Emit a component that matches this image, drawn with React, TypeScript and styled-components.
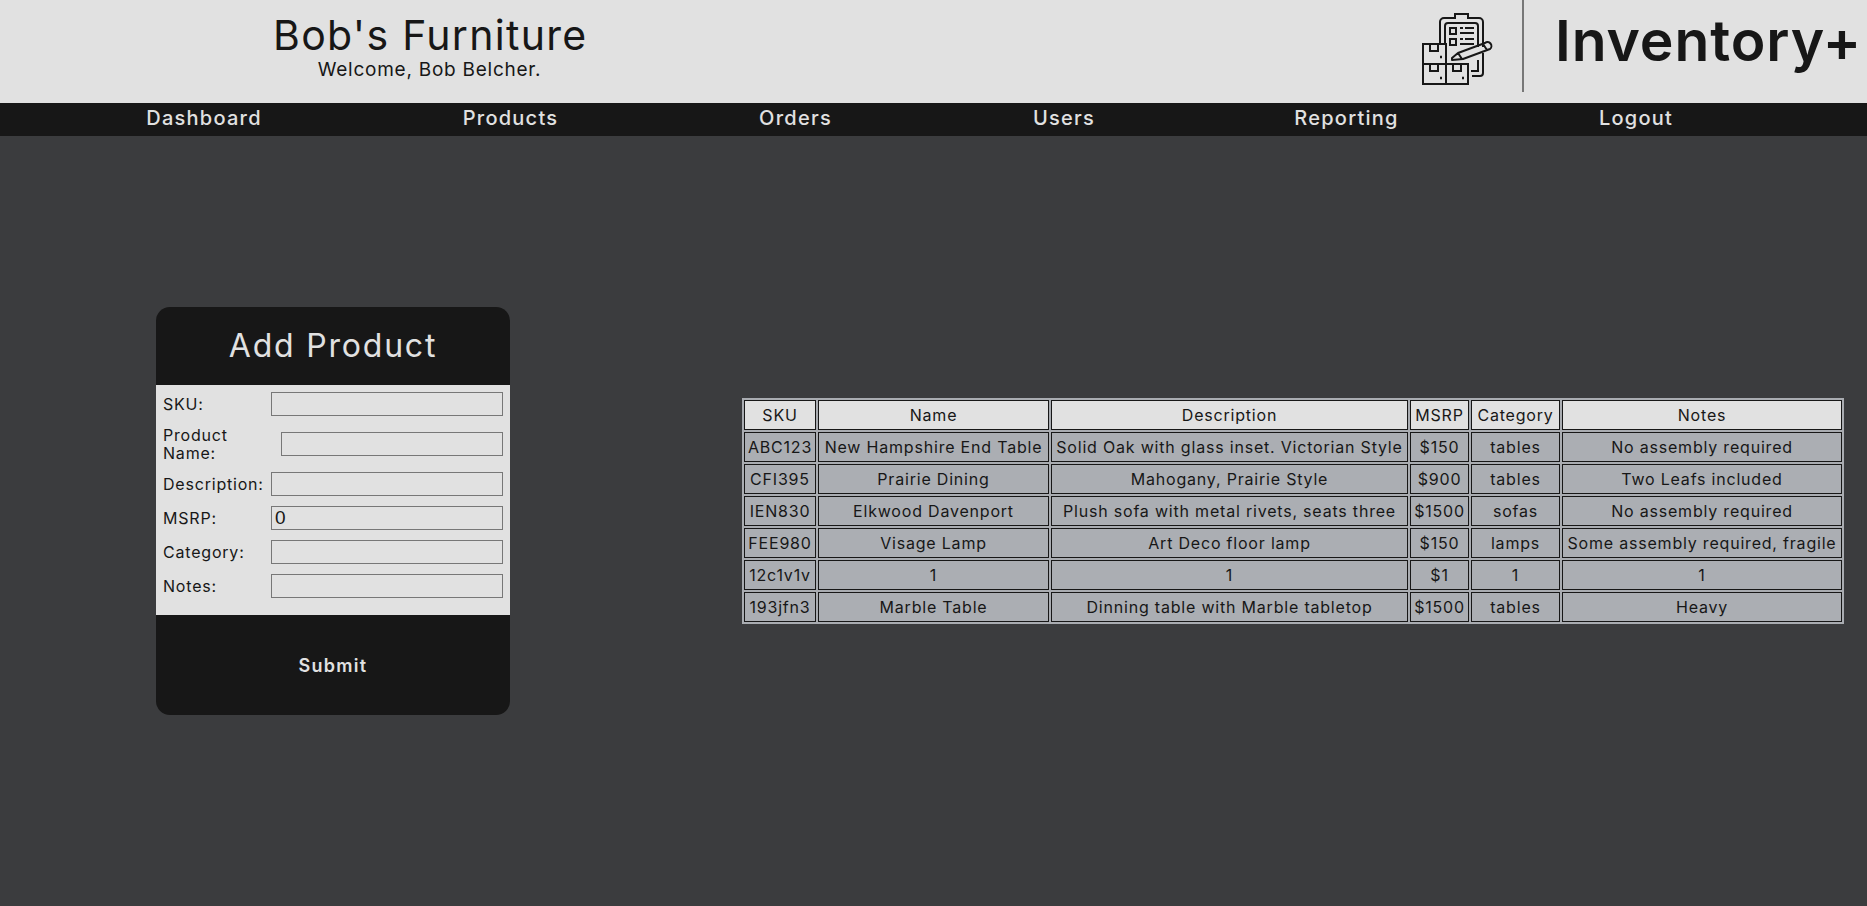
import React from "react";
import styled, { createGlobalStyle } from "styled-components";

const FONT = `Inter, "Open Sans", "Liberation Sans", sans-serif`;
const Global = createGlobalStyle`
  html, body { margin: 0; padding: 0; background: #3b3c3e; }
  body { font-family: ${FONT}; color: #171717; }
  * { box-sizing: border-box; }
`;
const Page = styled.div`width: 1867px; height: 906px; overflow: hidden; background: #3b3c3e;`;
const Header = styled.header`height: 103px; background: #e1e1e1; display: flex; justify-content: space-between; align-items: flex-start;`;
const Brand = styled.div`margin-left: 273px; width: 313px; padding-top: 11px; text-align: center;`;
const Title = styled.h1`margin: 0; font-size: 41px; line-height: 48px; font-weight: 400; letter-spacing: 1.3px; white-space: nowrap;`;
const Welcome = styled.div`font-size: 19px; line-height: 22px; letter-spacing: 0.75px; white-space: nowrap;`;
const Logo = styled.div`display: flex; align-items: flex-start; width: 447px;`;
const LogoIcon = styled.svg`width: 75px; height: 75px; margin-top: 10px; flex: none;`;
const Divider = styled.div`width: 2px; height: 92px; background: #777; margin-left: 27px; flex: none;`;
const LogoText = styled.div`font-size: 57px; line-height: 82px; font-weight: 600; letter-spacing: 0.9px; margin-left: 31px; white-space: nowrap;`;
const Nav = styled.nav`height: 33px; background: #171717; display: flex; padding-left: 145px; gap: 201px; align-items: flex-start; padding-top: 1px;`;
const NavLink = styled.a<{ $w: number }>`color: #e1e1e1; font-size: 20px; line-height: 28px; font-weight: 500; letter-spacing: 1.25px; width: ${p => p.$w}px; display: flex; justify-content: center; white-space: nowrap; flex: none;`;
const Main = styled.main`height: 750px; display: flex; align-items: center; padding-left: 156px; gap: 232px;`;
const Card = styled.section`width: 354px; height: 408px; border-radius: 14px; overflow: hidden; background: #171717; display: flex; flex-direction: column; flex: none;`;
const CardTitle = styled.h2`margin: 0; height: 78px; color: #e1e1e1; font-size: 32px; font-weight: 400; letter-spacing: 1.8px; line-height: 78px; text-align: center;`;
const Form = styled.div`height: 230px; background: #e1e1e1; padding: 7px; display: flex; flex-direction: column; gap: 10px;`;
const Row = styled.div<{ $h: number }>`display: flex; align-items: center; height: ${p => p.$h}px; flex: none;`;
const Label = styled.label<{ $w: number }>`flex: none; width: ${p => p.$w}px; font-size: 16px; line-height: 18px; letter-spacing: 0.8px; padding-right: 6px;`;
const Input = styled.input`flex: 1; min-width: 0; height: 24px; border: 1px solid #777; background: #e1e1e1; padding: 0 3px; font: 19px "Liberation Sans", sans-serif; color: #171717; border-radius: 0;`;
const Submit = styled.button`flex: 1; border: 0; background: transparent; color: #e1e1e1; font: 600 18px ${FONT}; letter-spacing: 1.3px; padding: 0;`;
const Table = styled.table`width: 1102px; table-layout: fixed; border: 0; border-collapse: separate; border-spacing: 2px; flex: none; background: #a9acb1;`;
const Th = styled.th`height: 30px; padding: 0; border: 1px solid #171717; background: #e1e1e1; font-size: 16px; font-weight: 440; letter-spacing: 0.8px; text-align: center; white-space: nowrap;`;
const Td = styled.td`height: 30px; padding: 0; border: 1px solid #171717; background: #abaeb3; font-size: 16px; font-weight: 440; letter-spacing: 0.8px; text-align: center; white-space: nowrap;`;

const cols = [72, 231, 357, 59, 89, 280];
const head = ["SKU", "Name", "Description", "MSRP", "Category", "Notes"];
const rows = [
  ["ABC123", "New Hampshire End Table", "Solid Oak with glass inset. Victorian Style", "$150", "tables", "No assembly required"],
  ["CFI395", "Prairie Dining", "Mahogany, Prairie Style", "$900", "tables", "Two Leafs included"],
  ["IEN830", "Elkwood Davenport", "Plush sofa with metal rivets, seats three", "$1500", "sofas", "No assembly required"],
  ["FEE980", "Visage Lamp", "Art Deco floor lamp", "$150", "lamps", "Some assembly required, fragile"],
  ["12c1v1v", "1", "1", "$1", "1", "1"],
  ["193jfn3", "Marble Table", "Dinning table with Marble tabletop", "$1500", "tables", "Heavy"],
];
const nav: [string, number][] = [["Dashboard", 118], ["Products", 93], ["Orders", 75], ["Users", 60], ["Reporting", 103], ["Logout", 74]];
const fields: [string, number, number][] = [
  ["SKU:", 108, 24],
  ["Product Name:", 118, 36],
  ["Description:", 108, 24],
  ["MSRP:", 108, 24],
  ["Category:", 108, 24],
  ["Notes:", 108, 24],
];

const Icon = () => (
  <LogoIcon viewBox="0 0 75 75" fill="none" stroke="#171717" strokeWidth="2">
    <path d="M20 33V12a4 4 0 0 1 4-4h11V4h13v4h11a4 4 0 0 1 4 4v25M63 43v20a3 3 0 0 1-3 3h-8" />
    <path d="M25 33V16a3 3 0 0 1 3-3h27a3 3 0 0 1 3 3v21M58 50v11h-7" />
    <path d="M30 18h6v6h-6zM30 29h6v6h-6z" />
    <path d="M40 18h3M45 18h9M40 23h14M40 29h3M45 29h9M40 34h14" />
    <path d="M3 34h23v20H3zM3 54h23v20H3zM26 54h22v20H26z" />
    <path d="M10 34v7h8v-7M10 54v7h8v-7M33 54v7h8v-7" />
    <path d="M20 47h2M20 68h2M42 68h2" strokeWidth="2.4" />
    <path d="M32 48l6-5 27-10a3.5 3.5 0 0 1 5 6L43 49l-11 1zM38 43l4 6M63 34l4 6" strokeLinejoin="round" />
  </LogoIcon>
);

export default function App() {
  return (
    <Page>
      <Global />
      <Header>
        <Brand>
          <Title>Bob's Furniture</Title>
          <Welcome>Welcome, Bob Belcher.</Welcome>
        </Brand>
        <Logo>
          <Icon />
          <Divider />
          <LogoText>Inventory+</LogoText>
        </Logo>
      </Header>
      <Nav>{nav.map(([t, w]) => <NavLink key={t} $w={w}>{t}</NavLink>)}</Nav>
      <Main>
        <Card>
          <CardTitle>Add Product</CardTitle>
          <Form>
            {fields.map(([l, w, h]) => (
              <Row key={l} $h={h}>
                <Label $w={w}>{l}</Label>
                <Input defaultValue={l === "MSRP:" ? "0" : ""} />
              </Row>
            ))}
          </Form>
          <Submit>Submit</Submit>
        </Card>
        <Table>
          <colgroup>{cols.map((w, i) => <col key={i} style={{ width: w }} />)}</colgroup>
          <thead><tr>{head.map(h => <Th key={h}>{h}</Th>)}</tr></thead>
          <tbody>{rows.map(r => <tr key={r[0]}>{r.map((c, i) => <Td key={i}>{c}</Td>)}</tr>)}</tbody>
        </Table>
      </Main>
    </Page>
  );
}
